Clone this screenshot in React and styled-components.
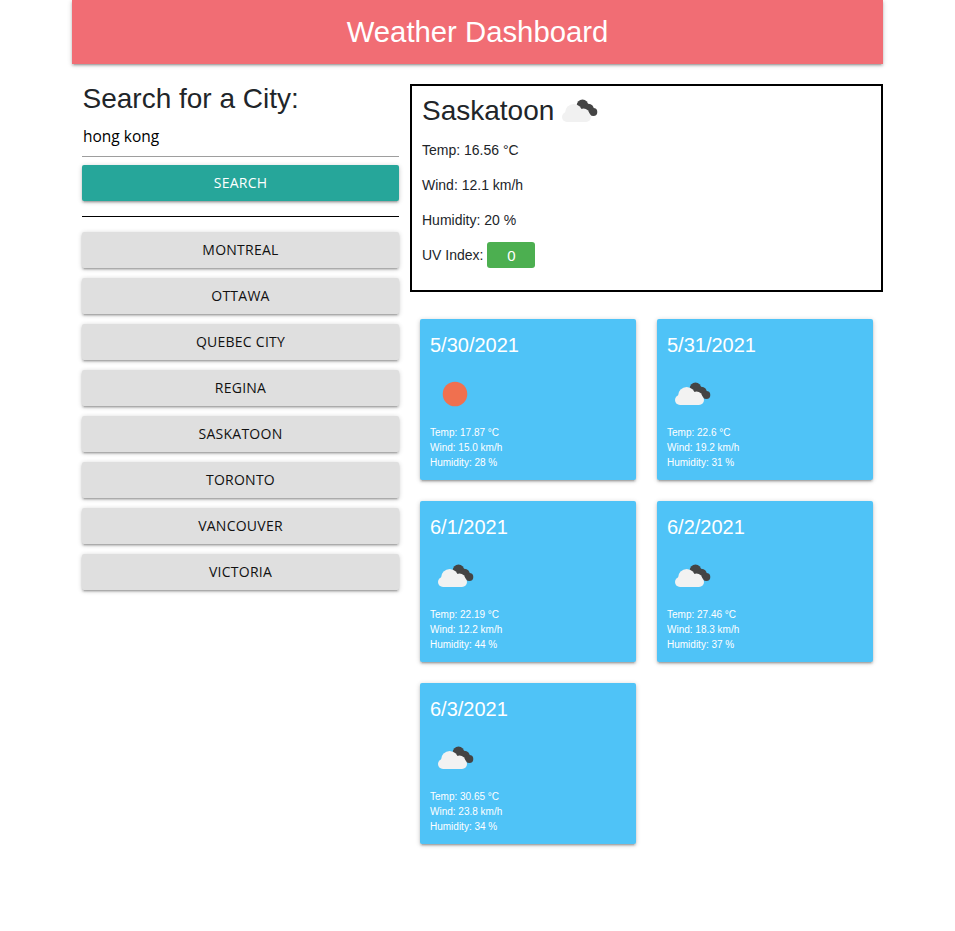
import React from 'react';
import styled, { createGlobalStyle } from 'styled-components';

const GlobalStyle = createGlobalStyle`
  body {
    margin: 0;
    background: #fff;
    font-family: "Liberation Sans", Arial, sans-serif;
    color: #212529;
  }
`;

const raised = `
  box-shadow: 0 2px 2px 0 rgba(0,0,0,.14), 0 3px 1px -2px rgba(0,0,0,.12), 0 1px 5px 0 rgba(0,0,0,.2);
`;

const Page = styled.div`
  width: 811px;
  margin: 0 0 0 72px;
  padding-bottom: 87px;
`;

const Header = styled.header`
  height: 64px;
  display: flex;
  align-items: center;
  justify-content: center;
  background: #f16d74;
  color: #fff;
  font-size: 29.3px;
  ${raised}
`;

const Columns = styled.main`
  display: grid;
  grid-template-columns: 338px 473px;
  margin-top: 20px;
`;

const Sidebar = styled.aside`
  padding: 0 11px 0 10px;
`;

const SideTitle = styled.h2`
  margin: 0;
  padding: 1px 0 0 0.5px;
  height: 28px;
  box-sizing: border-box;
  font-size: 28px;
  font-weight: 400;
  line-height: 28px;
`;

const CityInput = styled.input`
  display: block;
  box-sizing: border-box;
  width: 100%;
  height: 45px;
  padding: 4px 0 0 1px;
  border: 0;
  border-bottom: 1px solid #9e9e9e;
  outline: none;
  background: transparent;
  font-family: "Open Sans", sans-serif;
  font-size: 15.5px;
  color: #000;
`;

const Button = styled.button`
  display: block;
  width: 100%;
  height: 36px;
  padding: 0 0 2px;
  border: 0;
  border-radius: 2px;
  background: ${p => (p.$primary ? '#26a69a' : '#dfdfdf')};
  color: ${p => (p.$primary ? '#fff' : '#111')};
  font-family: "Open Sans", sans-serif;
  font-size: 14px;
  letter-spacing: .25px;
  text-transform: uppercase;
  cursor: pointer;
  ${raised}
`;

const SearchButton = styled(Button)`
  margin-top: 8px;
`;

const Divider = styled.hr`
  height: 1px;
  margin: 15px 0;
  border: 0;
  background: #000;
`;

const CityList = styled.div`
  display: flex;
  flex-direction: column;
  gap: 10px;
`;

const Current = styled.section`
  box-sizing: border-box;
  height: 208px;
  padding: 0 10px;
  border: 2px solid #000;
`;

const CurrentTitle = styled.div`
  display: flex;
  align-items: center;
  height: 50px;
  font-size: 28px;
`;

const Stats = styled.div`
  display: flex;
  flex-direction: column;
  gap: 14px;
  padding-top: 4px;
  font-size: 14px;
`;

const Stat = styled.div`
  display: flex;
  align-items: center;
  gap: 4px;
  height: 21px;
  line-height: 21px;
`;

const UvBadge = styled.span`
  display: flex;
  align-items: center;
  justify-content: center;
  width: 48px;
  height: 26px;
  margin-top: -1px;
  border-radius: 3px;
  background: #4caf50;
  color: #fff;
  font-size: 15px;
`;

const Forecast = styled.section`
  display: grid;
  grid-template-columns: 216px 216px;
  gap: 21px;
  padding: 27px 10px 0;
`;

const Card = styled.article`
  box-sizing: border-box;
  height: 161px;
  padding: 14px 10px 0;
  border-radius: 2px;
  background: #4fc3f7;
  color: #fff;
  ${raised}
`;

const CardDate = styled.div`
  height: 24px;
  font-size: 20px;
  line-height: 24px;
`;

const CardIcon = styled.div`
  height: 50px;
  margin-top: 12px;
`;

const CardStats = styled.div`
  margin-top: 6px;
  font-size: 10px;
  line-height: 15px;
`;

const Cloud = ({ light }) => (
  <svg width="50" height="50" viewBox="0 0 50 50" aria-hidden="true">
    <g fill="#444">
      <circle cx="28.5" cy="19.3" r="5.8" />
      <circle cx="34.5" cy="23" r="5.3" />
      <circle cx="39.3" cy="26" r="4" />
    </g>
    <g fill={light ? '#f1f1f1' : '#f2f2f2'}>
      <circle cx="19.7" cy="26.5" r="8.6" />
      <circle cx="29.5" cy="28.5" r="6" />
      <rect x="8" y="26" width="29" height="10" rx="5" />
    </g>
  </svg>
);

const Sun = () => (
  <svg width="50" height="50" viewBox="0 0 50 50" aria-hidden="true">
    <circle cx="25" cy="25" r="12.3" fill="#f0704f" />
  </svg>
);

const cities = ['Montreal', 'Ottawa', 'Quebec City', 'Regina', 'Saskatoon', 'Toronto', 'Vancouver', 'Victoria'];

const days = [
  { date: '5/30/2021', sun: true, temp: '17.87', wind: '15.0', humidity: 28 },
  { date: '5/31/2021', temp: '22.6', wind: '19.2', humidity: 31 },
  { date: '6/1/2021', temp: '22.19', wind: '12.2', humidity: 44 },
  { date: '6/2/2021', temp: '27.46', wind: '18.3', humidity: 37 },
  { date: '6/3/2021', temp: '30.65', wind: '23.8', humidity: 34 },
];

export default function App() {
  return (
    <Page>
      <GlobalStyle />
      <Header>Weather Dashboard</Header>
      <Columns>
        <Sidebar>
          <SideTitle>Search for a City:</SideTitle>
          <CityInput defaultValue="hong kong" />
          <SearchButton $primary>Search</SearchButton>
          <Divider />
          <CityList>
            {cities.map(city => (
              <Button key={city}>{city}</Button>
            ))}
          </CityList>
        </Sidebar>
        <div>
          <Current>
            <CurrentTitle>
              Saskatoon <Cloud light />
            </CurrentTitle>
            <Stats>
              <Stat>Temp: 16.56 °C</Stat>
              <Stat>Wind: 12.1 km/h</Stat>
              <Stat>Humidity: 20 %</Stat>
              <Stat>
                UV Index: <UvBadge>0</UvBadge>
              </Stat>
            </Stats>
          </Current>
          <Forecast>
            {days.map(day => (
              <Card key={day.date}>
                <CardDate>{day.date}</CardDate>
                <CardIcon>{day.sun ? <Sun /> : <Cloud />}</CardIcon>
                <CardStats>
                  <div>Temp: {day.temp} °C</div>
                  <div>Wind: {day.wind} km/h</div>
                  <div>Humidity: {day.humidity} %</div>
                </CardStats>
              </Card>
            ))}
          </Forecast>
        </div>
      </Columns>
    </Page>
  );
}
